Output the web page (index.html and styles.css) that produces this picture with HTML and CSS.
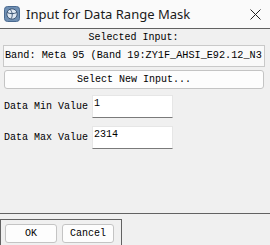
FILE: index.html
```html
<!DOCTYPE html>
<html lang="en">
<head>
  <meta charset="UTF-8">
  <title>Input for Data Range Mask</title>
  <link rel="stylesheet" href="styles.css">
</head>
<body>

<div class="titlebar">
  <svg class="app-icon" width="16" height="16" viewBox="0 0 16 16">
    <rect x="0.5" y="0.5" width="15" height="15" rx="3" fill="#6f8fb3" stroke="#4a6a90"/>
    <circle cx="8" cy="8" r="5.2" fill="#dfe8f2" stroke="#3d5675" stroke-width="1"/>
    <path d="M3.2 6.5 C6 8, 10 8, 12.8 6.5" fill="none" stroke="#3d5675" stroke-width="1"/>
    <path d="M6 3.2 C8.5 6, 9 10, 7 12.8" fill="none" stroke="#3d5675" stroke-width="1"/>
  </svg>
  <span class="title">Input for Data Range Mask</span>
  <svg class="close" width="11" height="11" viewBox="0 0 11 11">
    <path d="M0.5 0.5 L10.5 10.5 M10.5 0.5 L0.5 10.5" stroke="#222" stroke-width="1"/>
  </svg>
</div>

<div class="panel">
  <div class="caption">Selected Input:</div>
  <div class="field">Band: Meta 95 (Band 19:ZY1F_AHSI_E92.12_N3</div>
  <button class="wide-btn">Select New Input...</button>

  <div class="row">
    <span class="label">Data Min Value</span>
    <div class="input">1</div>
  </div>
  <div class="row">
    <span class="label">Data Max Value</span>
    <div class="input">2314</div>
  </div>
</div>

<div class="actions">
  <button class="btn">OK</button>
  <button class="btn">Cancel</button>
</div>

</body>
</html>
```

FILE: styles.css
```css
body {
  margin: 0;
  padding: 0;
  background-color: #f0f0f0;
  font-family: 'Liberation Mono', monospace;
  font-size: 10px;
  color: #000;
  overflow: hidden;
}

.titlebar {
  height: 28px;
  background-color: #fafafa;
  display: flex;
  align-items: center;
  padding-left: 4px;
}

.app-icon {
  flex: none;
}

.title {
  font-family: 'Noto Sans', sans-serif;
  font-size: 13px;
  color: #1a1a1a;
  margin-left: 6px;
}

.close {
  margin-left: auto;
  margin-right: 9px;
}

.panel {
  margin-left: -1px;
  width: 268px;
  height: 184px;
  border: 1px solid #626262;
  padding-left: 3px;
  display: flex;
  flex-direction: column;
}

.caption {
  width: 261px;
  text-align: center;
  line-height: 12px;
  margin-top: 3px;
}

.field {
  width: 259px;
  height: 20px;
  line-height: 20px;
  margin-top: 1px;
  padding-left: 1px;
  border: 1px solid #c9c9c9;
  background-color: #f9f9f9;
  white-space: nowrap;
  overflow: hidden;
  font-size: 10.2px;
}

.wide-btn {
  width: 260px;
  height: 19px;
  margin: 3px 0 0 1px;
  padding: 0;
  font-family: inherit;
  font-size: 10px;
  background-color: #fdfdfd;
  border: 1px solid #c4c4c4;
  border-radius: 3px;
}

.row {
  display: flex;
  align-items: center;
  margin-left: 1px;
  margin-top: 6px;
}

.row + .row {
  margin-top: 8px;
}

.label {
  width: 88px;
}

.input {
  width: 81px;
  height: 23px;
  line-height: 16px;
  background-color: #fff;
  border: 1px solid #e6e6e6;
  border-bottom-color: #7a7a7a;
  padding-left: 1px;
  box-sizing: border-box;
}

.actions {
  margin-top: 5px;
  width: 116px;
  height: 30px;
  border: 1px solid #626262;
  display: flex;
  gap: 5px;
  padding: 4px 0 0 4px;
}

.btn {
  width: 52px;
  height: 19px;
  padding: 0;
  font-family: inherit;
  font-size: 10px;
  background-color: #fdfdfd;
  border: 1px solid #c4c4c4;
  border-radius: 3px;
}
```
